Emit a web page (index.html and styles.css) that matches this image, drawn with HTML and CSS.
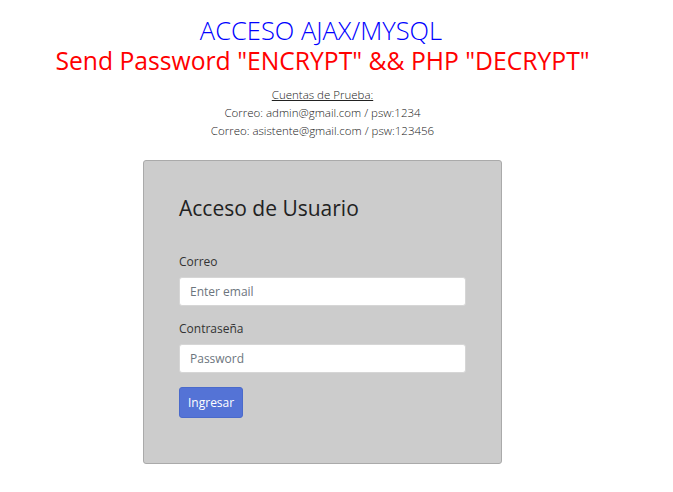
FILE: index.html
```html
<!DOCTYPE html>
<html lang="es">
<head>
<meta charset="utf-8">
<title>Acceso</title>
<link rel="stylesheet" href="styles.css">
</head>
<body>
<div class="page">
  <header class="intro">
    <h1 class="title">ACCESO AJAX/MYSQL</h1>
    <h2 class="subtitle">Send Password "ENCRYPT" &amp;&amp; PHP "DECRYPT"</h2>
    <div class="accounts">
      <p class="accounts-head">Cuentas de Prueba:</p>
      <p>Correo: admin@gmail.com / psw:1234</p>
      <p>Correo: asistente@gmail.com / psw:123456</p>
    </div>
  </header>
  <form class="card">
    <h3 class="card-title">Acceso de Usuario</h3>
    <div class="field">
      <label class="label" for="email">Correo</label>
      <input class="input" id="email" type="email" placeholder="Enter email">
    </div>
    <div class="field">
      <label class="label" for="pass">Contraseña</label>
      <input class="input" id="pass" type="password" placeholder="Password">
    </div>
    <button class="btn" type="button">Ingresar</button>
  </form>
</div>
</body>
</html>
```
FILE: styles.css
```css
html, body {
  margin: 0;
  padding: 0;
  background: #fff;
}
body {
  font-family: "Open Sans", "Noto Sans", sans-serif;
  color: #333;
}
.page {
  width: 645px;
  display: flex;
  flex-direction: column;
  align-items: center;
}
.intro {
  text-align: center;
}
.title {
  margin: 15px 0 0;
  padding-right: 3px;
  font-size: 25.5px;
  font-weight: 300;
  line-height: 30px;
  color: #0000ff;
}
.subtitle {
  margin: 0;
  font-size: 24.7px;
  font-weight: 400;
  line-height: 32px;
  color: #ff0000;
  white-space: nowrap;
}
.accounts {
  margin-top: 9px;
  font-size: 11.5px;
  font-weight: 300;
  line-height: 18px;
  color: #222;
}
.accounts p {
  margin: 0;
}
.accounts-head {
  text-decoration: underline;
}
.card {
  margin-top: 20px;
  width: 287px;
  padding: 33px 35px 45px;
  background: #cccccc;
  border: 1px solid #aaaaaa;
  border-radius: 3px;
}
.card-title {
  margin: 0 0 31px;
  font-size: 21px;
  font-weight: 400;
  line-height: 28px;
  color: #222;
}
.field {
  display: flex;
  flex-direction: column;
  gap: 6px;
  margin-bottom: 14px;
}
.label {
  font-size: 12px;
  line-height: 18px;
  color: #333;
}
.input {
  box-sizing: border-box;
  width: 287px;
  height: 29px;
  padding: 0 10px;
  border: 1px solid #d6d6d6;
  border-radius: 3px;
  background: #fff;
  font-family: inherit;
  font-size: 12px;
  color: #555;
}
.input::placeholder {
  color: #6c757d;
}
.btn {
  height: 31px;
  padding: 0 8px;
  border: 1px solid #4a6acb;
  border-radius: 3px;
  background: #5473d6;
  color: #fff;
  font-family: inherit;
  font-size: 12px;
}
```
